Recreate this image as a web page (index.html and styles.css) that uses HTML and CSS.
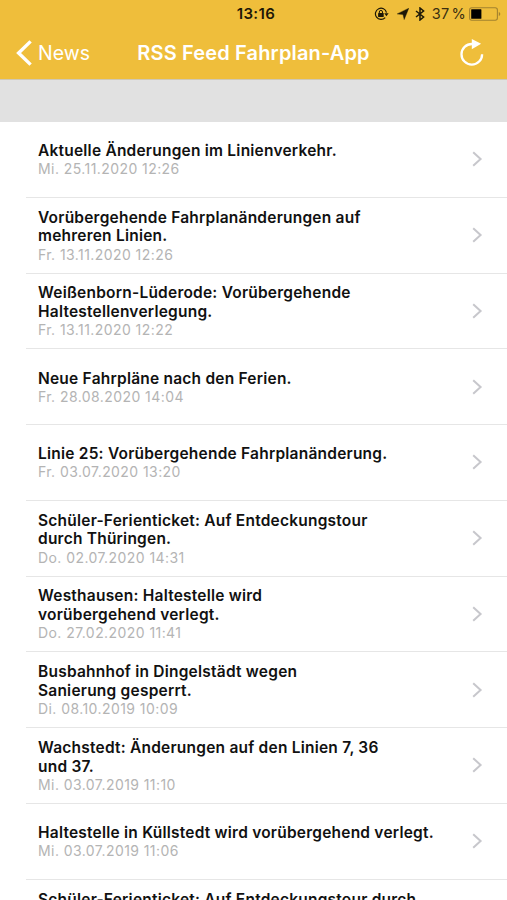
FILE: index.html
```html
<!DOCTYPE html>
<html lang="de">
<head>
  <meta charset="UTF-8" />
  <meta name="viewport" content="width=device-width, initial-scale=1.0"/>
  <title>RSS Feed Fahrplan-App</title>
  <link rel="stylesheet" href="styles.css">
</head>
<body>
  <div class="app">
    <header class="header">
      <!-- Status bar -->
      <div class="status-bar">
        <span></span>
        <span class="clock">13:16</span>
        <div class="status-icons">
          <svg class="lock" width="15" height="14" viewBox="0 0 15 14">
            <path d="M11.2 10.6A5.6 5.6 0 1 1 12.5 5.6" fill="none" stroke="#1d1807" stroke-width="1.2"/>
            <path d="M10.2 6.2h4.4l-2.2 3z" fill="#1d1807"/>
            <rect x="4.1" y="6.1" width="5.6" height="4" rx=".5" fill="#1d1807"/>
            <path d="M5.3 6.4V5a1.6 1.6 0 0 1 3.2 0v1.4" fill="none" stroke="#1d1807" stroke-width="1"/>
          </svg>
          <svg class="location" width="12" height="12" viewBox="0 0 12 12">
            <path d="M11.8.2L7.2 11.6 6 6.5.2 5.9z" fill="#1d1807" stroke="#1d1807" stroke-width=".4"/>
          </svg>
          <svg class="bluetooth" width="10" height="14" viewBox="0 0 10 14">
            <path d="M1 4l7.6 6L5 13V1l3.6 3L1 10" fill="none" stroke="#1d1807" stroke-width="1.5"/>
          </svg>
          <span class="percent">37 %</span>
          <svg class="battery" width="32" height="14" viewBox="0 0 32 14">
            <rect x=".6" y=".7" width="27.8" height="12.6" rx="2.2" fill="none" stroke="#a3822f" stroke-width="1.1"/>
            <rect x="2.2" y="2.3" width="10.2" height="9.4" rx=".5" fill="#000"/>
            <path d="M29.8 5v4q1.5-.5 1.5-2t-1.5-2z" fill="#a3822f"/>
          </svg>
        </div>
      </div>

      <!-- Navigation -->
      <nav class="nav">
        <a class="back">
          <svg width="16" height="26" viewBox="0 0 16 26">
            <path d="M14.6 1.4L2.6 13l12 11.6" fill="none" stroke="#fff" stroke-width="3.4"/>
          </svg>
          <span>News</span>
        </a>
        <h1>RSS Feed Fahrplan-App</h1>
        <a class="reload">
          <svg width="24" height="28" viewBox="0 0 24 28">
            <path d="M12 5A10.3 10.3 0 1 0 22.1 15.2" fill="none" stroke="#fff" stroke-width="2.3"/>
            <path d="M11.8 0l9.3 4.7-9.3 5.5z" fill="#fff"/>
          </svg>
        </a>
      </nav>
    </header>

    <div class="section-gap"></div>

    <!-- News list -->
    <ul class="feed">
      <li class="item">
        <div class="text">
          <h2>Aktuelle Änderungen im Linienverkehr.</h2>
          <p>Mi. 25.11.2020 12:26</p>
        </div>
        <svg class="arrow" width="11" height="16" viewBox="0 0 11 16"><path d="M1.2 1.2L8.6 8l-7.4 6.8"/></svg>
      </li>
      <li class="item">
        <div class="text">
          <h2>Vorübergehende Fahrplanänderungen auf<br>mehreren Linien.</h2>
          <p>Fr. 13.11.2020 12:26</p>
        </div>
        <svg class="arrow" width="11" height="16" viewBox="0 0 11 16"><path d="M1.2 1.2L8.6 8l-7.4 6.8"/></svg>
      </li>
      <li class="item">
        <div class="text">
          <h2>Weißenborn-Lüderode: Vorübergehende<br>Haltestellenverlegung.</h2>
          <p>Fr. 13.11.2020 12:22</p>
        </div>
        <svg class="arrow" width="11" height="16" viewBox="0 0 11 16"><path d="M1.2 1.2L8.6 8l-7.4 6.8"/></svg>
      </li>
      <li class="item">
        <div class="text">
          <h2>Neue Fahrpläne nach den Ferien.</h2>
          <p>Fr. 28.08.2020 14:04</p>
        </div>
        <svg class="arrow" width="11" height="16" viewBox="0 0 11 16"><path d="M1.2 1.2L8.6 8l-7.4 6.8"/></svg>
      </li>
      <li class="item">
        <div class="text">
          <h2>Linie 25: Vorübergehende Fahrplanänderung.</h2>
          <p>Fr. 03.07.2020 13:20</p>
        </div>
        <svg class="arrow" width="11" height="16" viewBox="0 0 11 16"><path d="M1.2 1.2L8.6 8l-7.4 6.8"/></svg>
      </li>
      <li class="item">
        <div class="text">
          <h2>Schüler-Ferienticket: Auf Entdeckungstour<br>durch Thüringen.</h2>
          <p>Do. 02.07.2020 14:31</p>
        </div>
        <svg class="arrow" width="11" height="16" viewBox="0 0 11 16"><path d="M1.2 1.2L8.6 8l-7.4 6.8"/></svg>
      </li>
      <li class="item">
        <div class="text">
          <h2>Westhausen: Haltestelle wird<br>vorübergehend verlegt.</h2>
          <p>Do. 27.02.2020 11:41</p>
        </div>
        <svg class="arrow" width="11" height="16" viewBox="0 0 11 16"><path d="M1.2 1.2L8.6 8l-7.4 6.8"/></svg>
      </li>
      <li class="item">
        <div class="text">
          <h2>Busbahnhof in Dingelstädt wegen<br>Sanierung gesperrt.</h2>
          <p>Di. 08.10.2019 10:09</p>
        </div>
        <svg class="arrow" width="11" height="16" viewBox="0 0 11 16"><path d="M1.2 1.2L8.6 8l-7.4 6.8"/></svg>
      </li>
      <li class="item">
        <div class="text">
          <h2>Wachstedt: Änderungen auf den Linien 7, 36<br>und 37.</h2>
          <p>Mi. 03.07.2019 11:10</p>
        </div>
        <svg class="arrow" width="11" height="16" viewBox="0 0 11 16"><path d="M1.2 1.2L8.6 8l-7.4 6.8"/></svg>
      </li>
      <li class="item">
        <div class="text">
          <h2>Haltestelle in Küllstedt wird vorübergehend verlegt.</h2>
          <p>Mi. 03.07.2019 11:06</p>
        </div>
        <svg class="arrow" width="11" height="16" viewBox="0 0 11 16"><path d="M1.2 1.2L8.6 8l-7.4 6.8"/></svg>
      </li>
      <li class="item last">
        <div class="text">
          <h2>Schüler-Ferienticket: Auf Entdeckungstour durch</h2>
        </div>
      </li>
    </ul>
  </div>
</body>
</html>
```

FILE: styles.css
```css
* {
  box-sizing: border-box;
}

body {
  margin: 0;
  font-family: Inter, "Liberation Sans", sans-serif;
  background: #fff;
}

.app {
  height: 900px;
  overflow: hidden;
}

.header {
  height: 79px;
  background: #efbe3b;
}

.status-bar {
  display: grid;
  grid-template-columns: 1fr auto 1fr;
  align-items: center;
  height: 27px;
  padding: 0 6px 0 11px;
}

.clock {
  font-size: 15px;
  font-weight: 600;
  letter-spacing: 0.4px;
  color: #1d1807;
}

.status-icons {
  display: flex;
  align-items: center;
  justify-content: flex-end;
}

.location {
  margin-left: 8px;
}

.bluetooth {
  margin-left: 6px;
}

.percent {
  margin: 0 3px 0 7px;
  font-size: 14.5px;
  letter-spacing: 0.2px;
  white-space: nowrap;
  word-spacing: -2px;
  color: #3a2f10;
}

.nav {
  display: grid;
  grid-template-columns: 1fr auto 1fr;
  align-items: center;
  height: 51px;
  padding: 0 23px 0 16px;
  color: #fff;
}

.nav h1 {
  margin: 0;
  padding-left: 7px;
  font-size: 20px;
  font-weight: 600;
  letter-spacing: 0.15px;
}

.back {
  display: flex;
  align-items: center;
  gap: 6px;
  font-size: 19.5px;
}

.reload {
  display: flex;
  justify-content: flex-end;
}

.section-gap {
  height: 43px;
  background: #e1e1e1;
  border-top: 1px solid #cfc8b5;
}

.feed {
  margin: 0;
  padding: 0 0 0 26px;
  list-style: none;
}

.item {
  display: flex;
  align-items: center;
  justify-content: space-between;
  height: 75.75px;
  padding: 0 24px 0 12px;
  border-bottom: 1px solid #e6e6e6;
}

.item h2 {
  margin: 0;
  font-size: 15.5px;
  font-weight: 600;
  line-height: 18.7px;
  letter-spacing: 0.22px;
  white-space: nowrap;
  color: #111;
}

.item p {
  margin: 0;
  font-size: 14px;
  line-height: 18px;
  letter-spacing: 0.43px;
  color: #b4b4b4;
}

.text {
  padding-top: 2px;
}

.item p {
  margin-top: -0.5px;
}

.arrow {
  flex: none;
  fill: none;
  stroke: #c7c7cc;
  stroke-width: 2;
}

.last {
  align-items: flex-start;
  padding-top: 9.5px;
}
```
